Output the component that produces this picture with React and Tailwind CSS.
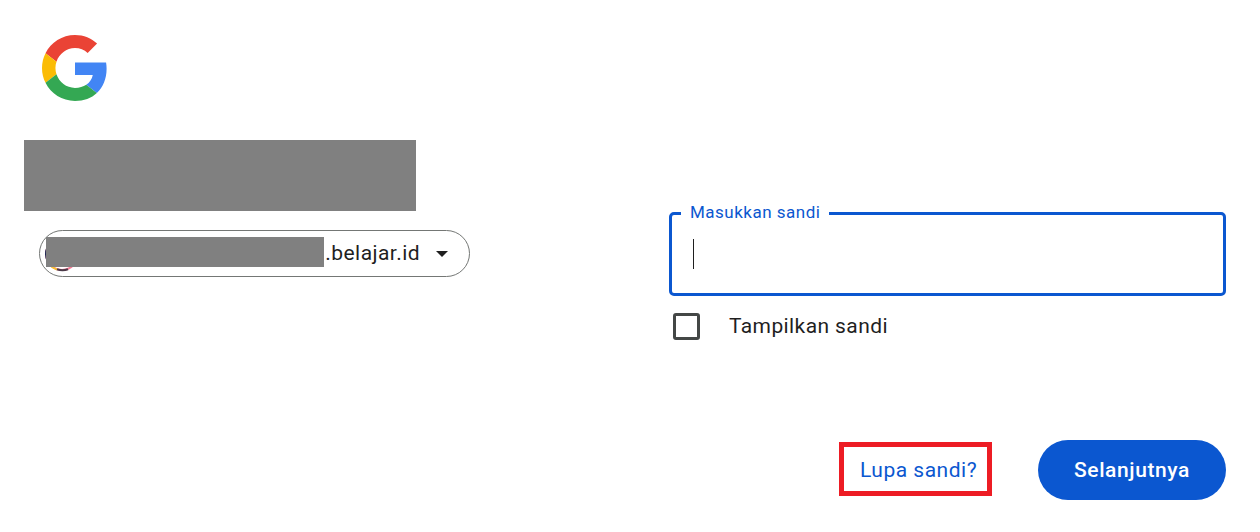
import React from 'react';

const GoogleLogo = () => (
  <svg viewBox="0 0 48 48" className="w-[66px] h-[66px] block">
    <path fill="#EA4335" d="M24 9.5c3.54 0 6.71 1.22 9.21 3.6l6.85-6.85C35.9 2.38 30.47 0 24 0 14.62 0 6.51 5.38 2.56 13.22l7.98 6.19C12.43 13.72 17.74 9.5 24 9.5z" />
    <path fill="#4285F4" d="M46.98 24.55c0-1.57-.15-3.09-.38-4.55H24v9.02h12.94c-.58 2.96-2.26 5.48-4.78 7.18l7.73 6c4.51-4.18 7.09-10.36 7.09-17.65z" />
    <path fill="#FBBC05" d="M10.53 28.59c-.48-1.45-.76-2.99-.76-4.59s.27-3.14.76-4.59l-7.98-6.19C.92 16.46 0 20.12 0 24c0 3.88.92 7.54 2.56 10.78l7.97-6.19z" />
    <path fill="#34A853" d="M24 48c6.48 0 11.93-2.13 15.89-5.81l-7.73-6c-2.15 1.45-4.92 2.3-8.16 2.3-6.26 0-11.57-4.22-13.47-9.91l-7.98 6.19C6.51 42.62 14.62 48 24 48z" />
  </svg>
);

const Avatar = () => (
  <svg viewBox="0 0 36 36" className="w-9 h-9 shrink-0">
    <circle cx="17" cy="18" r="16" fill="#fff" stroke="#f47c96" strokeWidth="2" />
    <path d="M17 2A16 16 0 0 0 1 18A16 16 0 0 0 8 31" fill="none" stroke="#1d2a55" strokeWidth="2" />
    <path d="M4 28a16 16 0 0 0 8 5.5" fill="none" stroke="#f5c22e" strokeWidth="2" />
    <path d="M12 33.3a16 16 0 0 0 11 0" fill="none" stroke="#4a3a48" strokeWidth="2" />
  </svg>
);

const App = () => {
  return (
    <div className="flex w-full h-[532px] bg-white overflow-hidden font-['Roboto',sans-serif] text-[#1f1f1f]">
      {/* left column: logo, heading, account chip */}
      <div className="w-[669px] shrink-0 pl-6 pt-[35px]">
        <div className="ml-[18px]">
          <GoogleLogo />
        </div>
        <div className="mt-[39px] w-[392px] h-[71px] bg-[#808080]" />
        <div className="relative mt-[19px] ml-[15px] w-[431px] h-[47px] rounded-full border border-[#747775] flex items-center pl-[5px] pr-[21px]">
          <Avatar />
          <span className="ml-auto text-[21px] leading-none tracking-[0.45px]">.belajar.id</span>
          <span className="ml-[16px] w-0 h-0 border-x-[6px] border-x-transparent border-t-[6px] border-t-[#1f1f1f]" />
          {/* redacted address */}
          <div className="absolute left-[6px] top-[6px] w-[278px] h-[30px] bg-[#808080]" />
        </div>
      </div>

      {/* right column: password form */}
      <div className="w-[557px] shrink-0 pt-[212px] flex flex-col">
        <div className="relative h-[84px] rounded-[5px] border-[3px] border-[#0b57d0] flex items-center pl-[21px]">
          <span className="w-px h-[30px] bg-[#1f1f1f]" />
          <span className="absolute left-[9px] -top-[13px] bg-white px-[9px] text-[17px] leading-[20px] tracking-[0.5px] text-[#0b57d0]">
            Masukkan sandi
          </span>
        </div>

        <label className="mt-[16px] ml-[4px] flex items-center">
          <span className="w-[27px] h-[27px] rounded-[3px] border-[3px] border-[#444746]" />
          <span className="ml-[29px] text-[21px] leading-[28px] tracking-[0.4px]">Tampilkan sandi</span>
        </label>

        <div className="mt-auto mb-[32px] flex items-center justify-end">
          <div className="mb-[2px] w-[153px] h-[54px] border-[5px] border-[#ed1c24] flex items-center pl-[16px] pt-[3px] text-[21px] font-[450] tracking-[0.5px] text-[#0b57d0]">
            Lupa sandi?
          </div>
          <button className="ml-[46px] w-[188px] h-[60px] rounded-full bg-[#0b57d0] pt-[1px] text-white text-[21px] font-medium tracking-[0.6px]">
            Selanjutnya
          </button>
        </div>
      </div>
    </div>
  );
};

export default App;
